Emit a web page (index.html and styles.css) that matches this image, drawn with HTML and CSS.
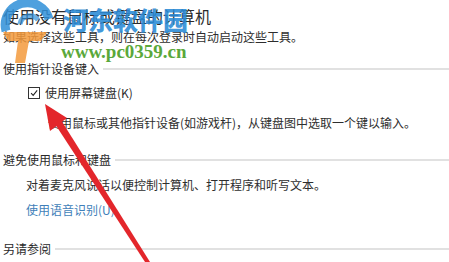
FILE: index.html
```html
<!DOCTYPE html>
<html lang="zh-CN">
<head>
<meta charset="utf-8">
<title>使用没有鼠标或键盘的计算机</title>
<link rel="stylesheet" href="styles.css">
</head>
<body>
<div class="page">
  <div class="title">使用没有鼠标或键盘的计算机</div>
  <div class="subtitle">如果选择这些工具，则在每次登录时自动启动这些工具。</div>

  <div class="section-head s1"><span>使用指针设备键入</span><i class="rule"></i></div>
  <label class="check-row">
    <span class="box"><svg viewBox="0 0 12 12" width="12" height="12"><path d="M2.5 6.2 L5 8.8 L9.8 2.8" fill="none" stroke="#222" stroke-width="1.3"/></svg></span>
    <span>使用屏幕键盘(K)</span>
  </label>
  <div class="desc">使用鼠标或其他指针设备(如游戏杆)，从键盘图中选取一个键以输入。</div>

  <div class="section-head s2"><span>避免使用鼠标和键盘</span><i class="rule"></i></div>
  <div class="text">对着麦克风说话以便控制计算机、打开程序和听写文本。</div>
  <div class="link">使用语音识别(U)</div>

  <div class="section-head s3"><span>另请参阅</span><i class="rule"></i></div>
</div>

<div class="watermark">
  <svg class="logo" viewBox="0 0 55 65" width="55" height="65">
    <path d="M6 31 A22 22 0 0 1 49 19" fill="none" stroke="#2f8fd8" stroke-width="9" opacity="0.85"/>
    <path d="M20 24 A10 10 0 0 1 38 20" fill="none" stroke="#2f8fd8" stroke-width="5" opacity="0.7"/>
    <path d="M3 32 L47 32 L41 41 L29 41 L25 63 L15 63 L18 41 L8 41 Z" fill="#f39a3c" opacity="0.85"/>
  </svg>
  <div class="wm-cn">河东软件园</div>
  <div class="wm-url">www.pc0359.cn</div>
</div>

<svg class="arrow" viewBox="0 0 449 262" width="449" height="262">
  <polygon points="45,104 67,118 50,131" fill="#e3262b"/>
  <polygon points="55,124 61,120 150,262 145,262" fill="#e3262b"/>
</svg>
</body>
</html>
```

FILE: styles.css
```css
html, body {
  margin: 0;
  padding: 0;
  background: #ffffff;
  width: 449px;
  height: 262px;
  overflow: hidden;
}

.page {
  padding-left: 3px;
  font-family: "Noto Sans CJK SC", "Noto Sans", sans-serif;
  color: #2e2e2e;
  font-size: 12px;
  line-height: 16px;
}

.title {
  font-size: 16px;
  line-height: 20px;
  margin-top: 6px;
  color: #2b2b2b;
}

.subtitle {
  margin-top: 3px;
}

.section-head {
  display: flex;
  align-items: center;
  gap: 4px;
  color: #2a2a2a;
}

.section-head .rule {
  flex: 1;
  height: 2px;
  background: #e1e1e1;
}

.s1 { margin-top: 16px; }
.s2 { margin-top: 21px; }
.s3 { margin-top: 23px; }

.check-row {
  display: flex;
  align-items: center;
  gap: 5px;
  margin-top: 8px;
  margin-left: 25px;
}

.box {
  width: 10px;
  height: 10px;
  border: 1px solid #333;
  display: flex;
  align-items: center;
  justify-content: center;
  background: #fff;
}

.box svg {
  width: 10px;
  height: 10px;
}

.desc {
  margin-top: 14px;
  padding-left: 45px;
}

.text {
  margin-top: 9px;
  padding-left: 23px;
}

.link {
  margin-top: 9px;
  padding-left: 23px;
  color: #3f7fb9;
}

.watermark {
  position: absolute;
  left: 0;
  top: 0;
  width: 200px;
  height: 65px;
  pointer-events: none;
}

.logo {
  position: absolute;
  left: 0;
  top: 0;
}

.wm-cn {
  position: absolute;
  left: 63px;
  top: 5px;
  font-family: "Noto Sans CJK SC", sans-serif;
  font-weight: 900;
  font-size: 25px;
  line-height: 28px;
  color: #2a8ad6;
  opacity: 0.88;
}

.wm-url {
  position: absolute;
  left: 61px;
  top: 42px;
  font-family: "Liberation Serif", serif;
  font-weight: bold;
  font-size: 19px;
  line-height: 20px;
  color: #5aa83a;
}

.arrow {
  position: absolute;
  left: 0;
  top: 0;
  pointer-events: none;
}
```
